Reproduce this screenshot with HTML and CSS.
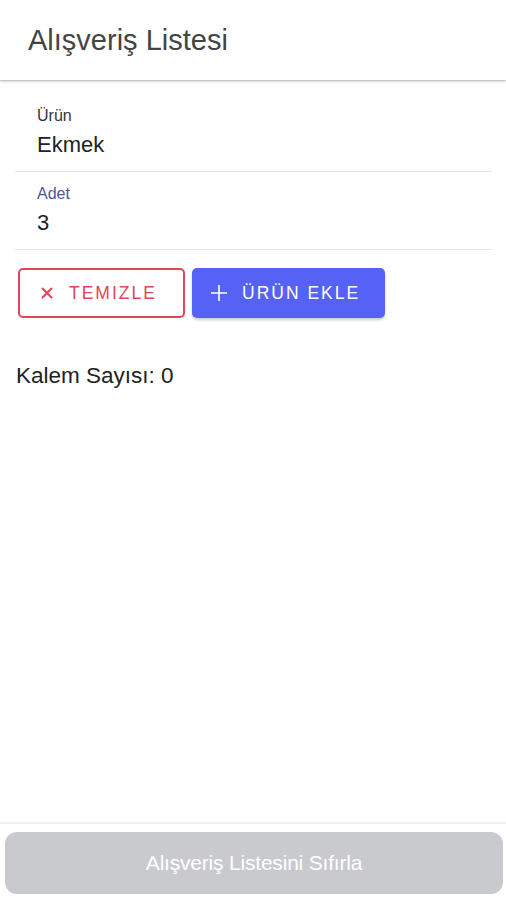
FILE: index.html
```html
<!DOCTYPE html>
<html lang="tr">
<head>
<meta charset="utf-8">
<title>Alışveriş Listesi</title>
<link rel="stylesheet" href="styles.css">
</head>
<body>
<div class="page">
  <header class="appbar">
    <h1 class="title">Alışveriş Listesi</h1>
  </header>
  <main class="content">
    <div class="field">
      <label class="field-label">Ürün</label>
      <div class="field-value">Ekmek</div>
    </div>
    <div class="field">
      <label class="field-label focused">Adet</label>
      <div class="field-value">3</div>
    </div>
    <div class="actions">
      <button class="btn btn-outline">
        <svg class="icon-x" width="12" height="12" viewBox="0 0 12 12"><path d="M1 1L11 11M11 1L1 11" stroke="currentColor" stroke-width="2" fill="none"/></svg>
        <span>TEMIZLE</span>
      </button>
      <button class="btn btn-primary">
        <svg class="icon-plus" width="16" height="16" viewBox="0 0 16 16"><path d="M8 0V16M0 8H16" stroke="currentColor" stroke-width="1.6" fill="none"/></svg>
        <span>ÜRÜN EKLE</span>
      </button>
    </div>
    <p class="count">Kalem Sayısı: 0</p>
  </main>
  <footer class="footer">
    <button class="reset-btn" disabled>Alışveriş Listesini Sıfırla</button>
  </footer>
</div>
</body>
</html>
```
FILE: styles.css
```css
html, body {
  margin: 0;
  padding: 0;
  background: #ffffff;
}
body {
  font-family: "Liberation Sans", Arial, sans-serif;
  color: #222;
}
.page {
  display: flex;
  flex-direction: column;
  height: 100vh;
}
.appbar {
  height: 80px;
  display: flex;
  align-items: center;
  padding-left: 28px;
  box-shadow: 0 1px 1px rgba(0,0,0,0.14), 0 2px 3px rgba(0,0,0,0.12);
  position: relative;
  z-index: 1;
}
.title {
  margin: 0;
  font-size: 29px;
  font-weight: normal;
  color: #444;
}
.content {
  flex: 1;
  padding: 14px 14px 0 15px;
}
.field {
  padding: 13px 0 13px 22px;
  border-bottom: 1px solid #e6e6e6;
  display: flex;
  flex-direction: column;
}
.field-label {
  font-size: 16px;
  line-height: 18px;
  color: #333;
  margin-bottom: 7px;
}
.field-label.focused {
  color: #4a569d;
}
.field-value {
  font-size: 22px;
  line-height: 26px;
  color: #222;
}
.actions {
  display: flex;
  gap: 7px;
  margin-top: 18px;
  padding-left: 3px;
}
.btn {
  height: 50px;
  display: flex;
  align-items: center;
  font-family: "Liberation Sans", Arial, sans-serif;
  font-size: 17.5px;
  letter-spacing: 2px;
  border-radius: 5px;
  cursor: pointer;
}
.btn-outline {
  width: 167px;
  padding: 0 0 0 21px;
  background: #fff;
  color: #e0465a;
  border: 2px solid #e0465a;
  gap: 16px;
}
.btn-primary {
  width: 193px;
  padding: 0 0 0 19px;
  background: #5661f5;
  color: #fff;
  border: none;
  box-shadow: 0 2px 3px rgba(0,0,0,0.2);
  gap: 15px;
}
.count {
  margin: 45px 0 0 1px;
  font-size: 22.5px;
  line-height: 26px;
  color: #222;
}
.footer {
  border-top: 2px solid #f0f0f0;
  padding: 8px 3px 6px 5px;
}
.reset-btn {
  width: 100%;
  height: 62px;
  border: none;
  border-radius: 12px;
  background: #c9cacd;
  color: #fff;
  font-family: "Liberation Sans", Arial, sans-serif;
  font-size: 21px;
  letter-spacing: -0.2px;
}
```
